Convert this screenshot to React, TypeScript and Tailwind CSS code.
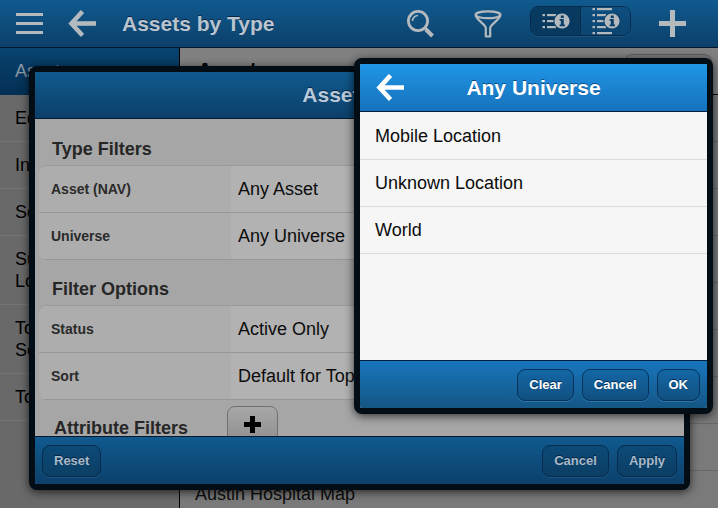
import type { ReactNode } from "react";

const sidebarItems = ["Eqp", "Inv", "Sets", "Sub\nLoc", "Tool\nSets", "Tool"];

const mapItems = ["", "", "", "", "", "", "", "", "Austin Hospital Map", ""];

function BackArrow() {
  return (
    <svg width="28" height="28" viewBox="0 0 28 28" fill="none" stroke="currentColor" strokeWidth="4.6" aria-hidden="true">
      <path d="M28 13.5H4" />
      <path d="M14.500 1.500L3.500 13.500L14.500 25.500" strokeLinejoin="miter" />
    </svg>
  );
}

function ListInfo({ full }: { full?: boolean }) {
  const rows = full ? [2, 8, 14, 20, 26] : [8, 14, 20];
  return (
    <svg width="28" height="28" viewBox="0 0 28 28" aria-hidden="true">
      {rows.map((y) => (
        <g key={y} fill="#b4b9be">
          <rect x="0.5" y={y - 1} width="2.5" height="2.2" />
          <rect x="5" y={y - 1} width={y === 2 || y === 26 ? 15 : 9} height="2.2" />
        </g>
      ))}
      <circle cx="20" cy="14" r="8.6" fill="#0b406a" />
      <circle cx="20" cy="14" r="7.6" fill="#b4b9be" />
      <path d="M18.800 8.500h3v2.400h-3zM17.600 12h4.200v5.600h1.200v1.700h-5.400v-1.700h1.200v-3.900h-1.200z" fill="#0b406a" />
    </svg>
  );
}

function BarButton({ children, dim }: { children: ReactNode; dim?: boolean }) {
  return (
    <button
      type="button"
      className={
        dim
          ? "h-8 rounded-lg border border-[#062b4c] bg-linear-to-b from-[#0b4a77] to-[#0c3e64] px-[11px] text-[13px] font-bold text-[#a9b9c9] shadow-[0_1px_0_#1b557f] text-shadow-[0_-1px_0_#042440]"
          : "h-8 rounded-lg border border-[#06315a] bg-linear-to-b from-[#1367a6] to-[#115080] px-[11px] text-[13px] font-bold text-white shadow-[0_1px_0_#2b77ad] text-shadow-[0_-1px_0_#04305a]"
      }
    >
      {children}
    </button>
  );
}

function FilterRow({ id, label, value }: { id: string; label: string; value: string }) {
  return (
    <div className="flex h-[47px] border-b border-[#979797] shadow-[inset_0_1px_0_#b8b8b8]">
      <label htmlFor={id} className="flex w-[192px] shrink-0 items-center bg-[#adadad] pl-3 text-[14px] font-bold text-[#2a2a2a]">
        {label}
      </label>
      <select id={id} className="min-w-0 grow appearance-none bg-[#b2b2b2] pl-[7px] text-[18px] text-[#0c0c0c]">
        <option>{value}</option>
      </select>
    </div>
  );
}

function TopBar() {
  return (
    <header className="flex h-12 shrink-0 items-center border-b border-[#03182a] bg-linear-to-b from-[#105a8f] to-[#0c406a] text-[#b4b9be]">
      <button type="button" aria-label="Menu" className="ml-4">
        <svg width="27" height="27" viewBox="0 0 27 27" fill="currentColor" aria-hidden="true">
          <path d="M0 3h27v3H0zM0 12h27v3H0zM0 21h27v3H0z" />
        </svg>
      </button>
      <button type="button" aria-label="Back" className="ml-[25px]">
        <BackArrow />
      </button>
      <h1 className="ml-[26px] grow text-[21px] font-bold text-[#b9c4cf] text-shadow-[0_-1px_0_#06294a]">Assets by Type</h1>
      <button type="button" aria-label="Search">
        <svg width="28" height="28" viewBox="0 0 28 28" fill="none" stroke="currentColor" aria-hidden="true">
          <circle cx="12" cy="11" r="9.6" strokeWidth="2.8" />
          <path d="M6.500 11a5.500 5.500 0 0 1 5.500-5.500" strokeWidth="1.500" />
          <path d="M18 17l2.500 2.500" strokeWidth="2.500" />
          <path d="M20 19.500l6.500 6.500" strokeWidth="4" />
        </svg>
      </button>
      <button type="button" aria-label="Filter" className="ml-10">
        <svg width="28" height="28" viewBox="0 0 28 28" fill="none" stroke="currentColor" strokeWidth="2.2" strokeLinejoin="round" aria-hidden="true">
          <ellipse cx="14" cy="4.800" rx="12.400" ry="3.400" />
          <path d="M1.600 5.500C3 10 11.800 15 11.800 18v8.500h4.400V18C16.200 15 25 10 26.400 5.500" />
        </svg>
      </button>
      <div className="mb-[5px] ml-7 flex h-[30px] w-[101px] overflow-hidden rounded-lg border border-[#062b4c] shadow-[0_1px_0_#1b557f]">
        <button type="button" aria-label="Compact details" className="flex w-[50px] items-center justify-center border-r border-[#062b4c] bg-[#083a60]">
          <ListInfo />
        </button>
        <button type="button" aria-label="Full details" className="flex grow items-center justify-center bg-linear-to-b from-[#0d4f80] to-[#0c4470]">
          <ListInfo full />
        </button>
      </div>
      <button type="button" aria-label="Add" className="mr-8 ml-7">
        <svg width="27" height="27" viewBox="0 0 27 27" fill="currentColor" aria-hidden="true">
          <path d="M11 0h5v11h11v5H16v11h-5V16H0v-5h11z" />
        </svg>
      </button>
    </header>
  );
}

function FilterDialog() {
  return (
    <section
      role="dialog"
      aria-label="Asset Filter"
      className="absolute top-[66px] right-7 bottom-[18px] left-[29px] flex flex-col overflow-hidden rounded-lg border-6 border-[#020d16] bg-[#a6a6a6] shadow-[0_2px_10px_#000000b0]"
    >
      <header className="flex h-[47px] shrink-0 items-center justify-center border-b border-[#03182a] bg-linear-to-b from-[#105a8f] to-[#0c406a]">
        <h2 className="text-[21px] font-bold text-[#b9c9d9] text-shadow-[0_-1px_0_#06294a]">Asset Filter</h2>
      </header>
      <div className="min-h-0 grow overflow-hidden px-1 text-[#262626]">
        <h3 className="flex h-[46px] items-end pb-0.5 pl-[13px] text-[18px] font-bold">Type Filters</h3>
        <div className="overflow-hidden rounded-lg border-t border-[#999]">
          <FilterRow id="asset" label="Asset (NAV)" value="Any Asset" />
          <FilterRow id="universe" label="Universe" value="Any Universe" />
        </div>
        <h3 className="flex h-[45px] items-end pb-0.5 pl-[13px] text-[18px] font-bold">Filter Options</h3>
        <div className="overflow-hidden rounded-lg border-t border-[#999]">
          <FilterRow id="status" label="Status" value="Active Only" />
          <FilterRow id="sort" label="Sort" value="Default for Top Level" />
        </div>
        <div className="flex pt-[6px] pl-[15px]">
          <h3 className="w-[173px] pt-[9px] text-[18px] leading-[26px] font-bold">Attribute Filters</h3>
          <button type="button" aria-label="Add attribute filter" className="flex h-9 w-[51px] items-center justify-center rounded-lg border border-[#707070] bg-linear-to-b from-[#a8a8a8] to-[#909090] text-black">
            <svg width="17" height="17" viewBox="0 0 17 17" fill="currentColor" aria-hidden="true">
              <path d="M6 0h5v6h6v5h-6v6H6v-6H0V6h6z" />
            </svg>
          </button>
        </div>
      </div>
      <footer className="flex h-12 shrink-0 items-center gap-2 border-t border-[#03182a] bg-linear-to-b from-[#105a8f] to-[#0c406a] px-[7px]">
        <div className="grow">
          <BarButton dim>Reset</BarButton>
        </div>
        <BarButton dim>Cancel</BarButton>
        <BarButton dim>Apply</BarButton>
      </footer>
    </section>
  );
}

function UniversePicker() {
  return (
    <section
      role="dialog"
      aria-label="Any Universe"
      className="absolute top-[58px] right-[5px] flex h-[356px] w-[359px] flex-col overflow-hidden rounded-lg border-6 border-[#020d16] bg-[#f6f6f6] shadow-[0_2px_10px_#000000b0]"
    >
      <header className="flex h-12 shrink-0 items-center border-b border-[#031f3c] bg-linear-to-b from-[#2095e6] to-[#1672bc] text-white">
        <button type="button" aria-label="Back" className="ml-4">
          <BackArrow />
        </button>
        <h2 className="mr-11 grow text-center text-[21px] font-bold text-shadow-[0_-1px_0_#0a4f8c]">Any Universe</h2>
      </header>
      <ul className="min-h-0 grow pt-px">
        {["Mobile Location", "Unknown Location", "World"].map((place) => (
          <li key={place} className="h-[47px] border-b border-[#dcdcdc]">
            <button type="button" className="h-full w-full px-[15px] text-left text-[18px] text-[#0c0c0c]">
              {place}
            </button>
          </li>
        ))}
      </ul>
      <footer className="flex h-12 shrink-0 items-center justify-end gap-2 border-t border-[#031f3c] bg-linear-to-b from-[#1876bd] to-[#145684] px-[7px]">
        <BarButton>Clear</BarButton>
        <BarButton>Cancel</BarButton>
        <BarButton>OK</BarButton>
      </footer>
    </section>
  );
}

export default function App() {
  return (
    <div className="relative flex h-screen flex-col overflow-hidden bg-[#7a7a7a] font-['Liberation_Sans',Arial,sans-serif]">
      <TopBar />
      <div className="flex min-h-0 grow">
        <nav className="w-[180px] shrink-0 border-r border-black bg-[#696969] text-[18px] leading-[22px] text-black">
          <a href="#assets" className="block h-[47px] bg-linear-to-b from-[#08436f] to-[#042f54] px-[15px] py-3 text-[#8b97a3]">
            Assets
          </a>
          {sidebarItems.map((item) => (
            <a key={item} href="#type" className="block border-b border-[#747474] px-[15px] py-3 whitespace-pre-line">
              {item}
            </a>
          ))}
        </nav>
        <main className="min-w-0 grow overflow-hidden">
          <div className="flex h-[47px] items-start justify-between border-b border-black bg-[#808080] pr-[6px] pl-[17px]">
            <h2 className="pt-1.5 text-[22px] font-bold text-black">Assets</h2>
            <button type="button" aria-label="Sort order" className="mt-[6px] h-8 w-[88px] rounded-lg border border-[#5c5c5c] bg-[#7c7c7c]" />
          </div>
          <ul className="text-[18px] text-[#0c0c0c]">
            {mapItems.map((item, index) => (
              <li key={index} className="flex h-[47px] items-center border-b border-[#686868] px-[15px]">
                {item}
              </li>
            ))}
          </ul>
        </main>
      </div>
      <FilterDialog />
      <UniversePicker />
    </div>
  );
}
